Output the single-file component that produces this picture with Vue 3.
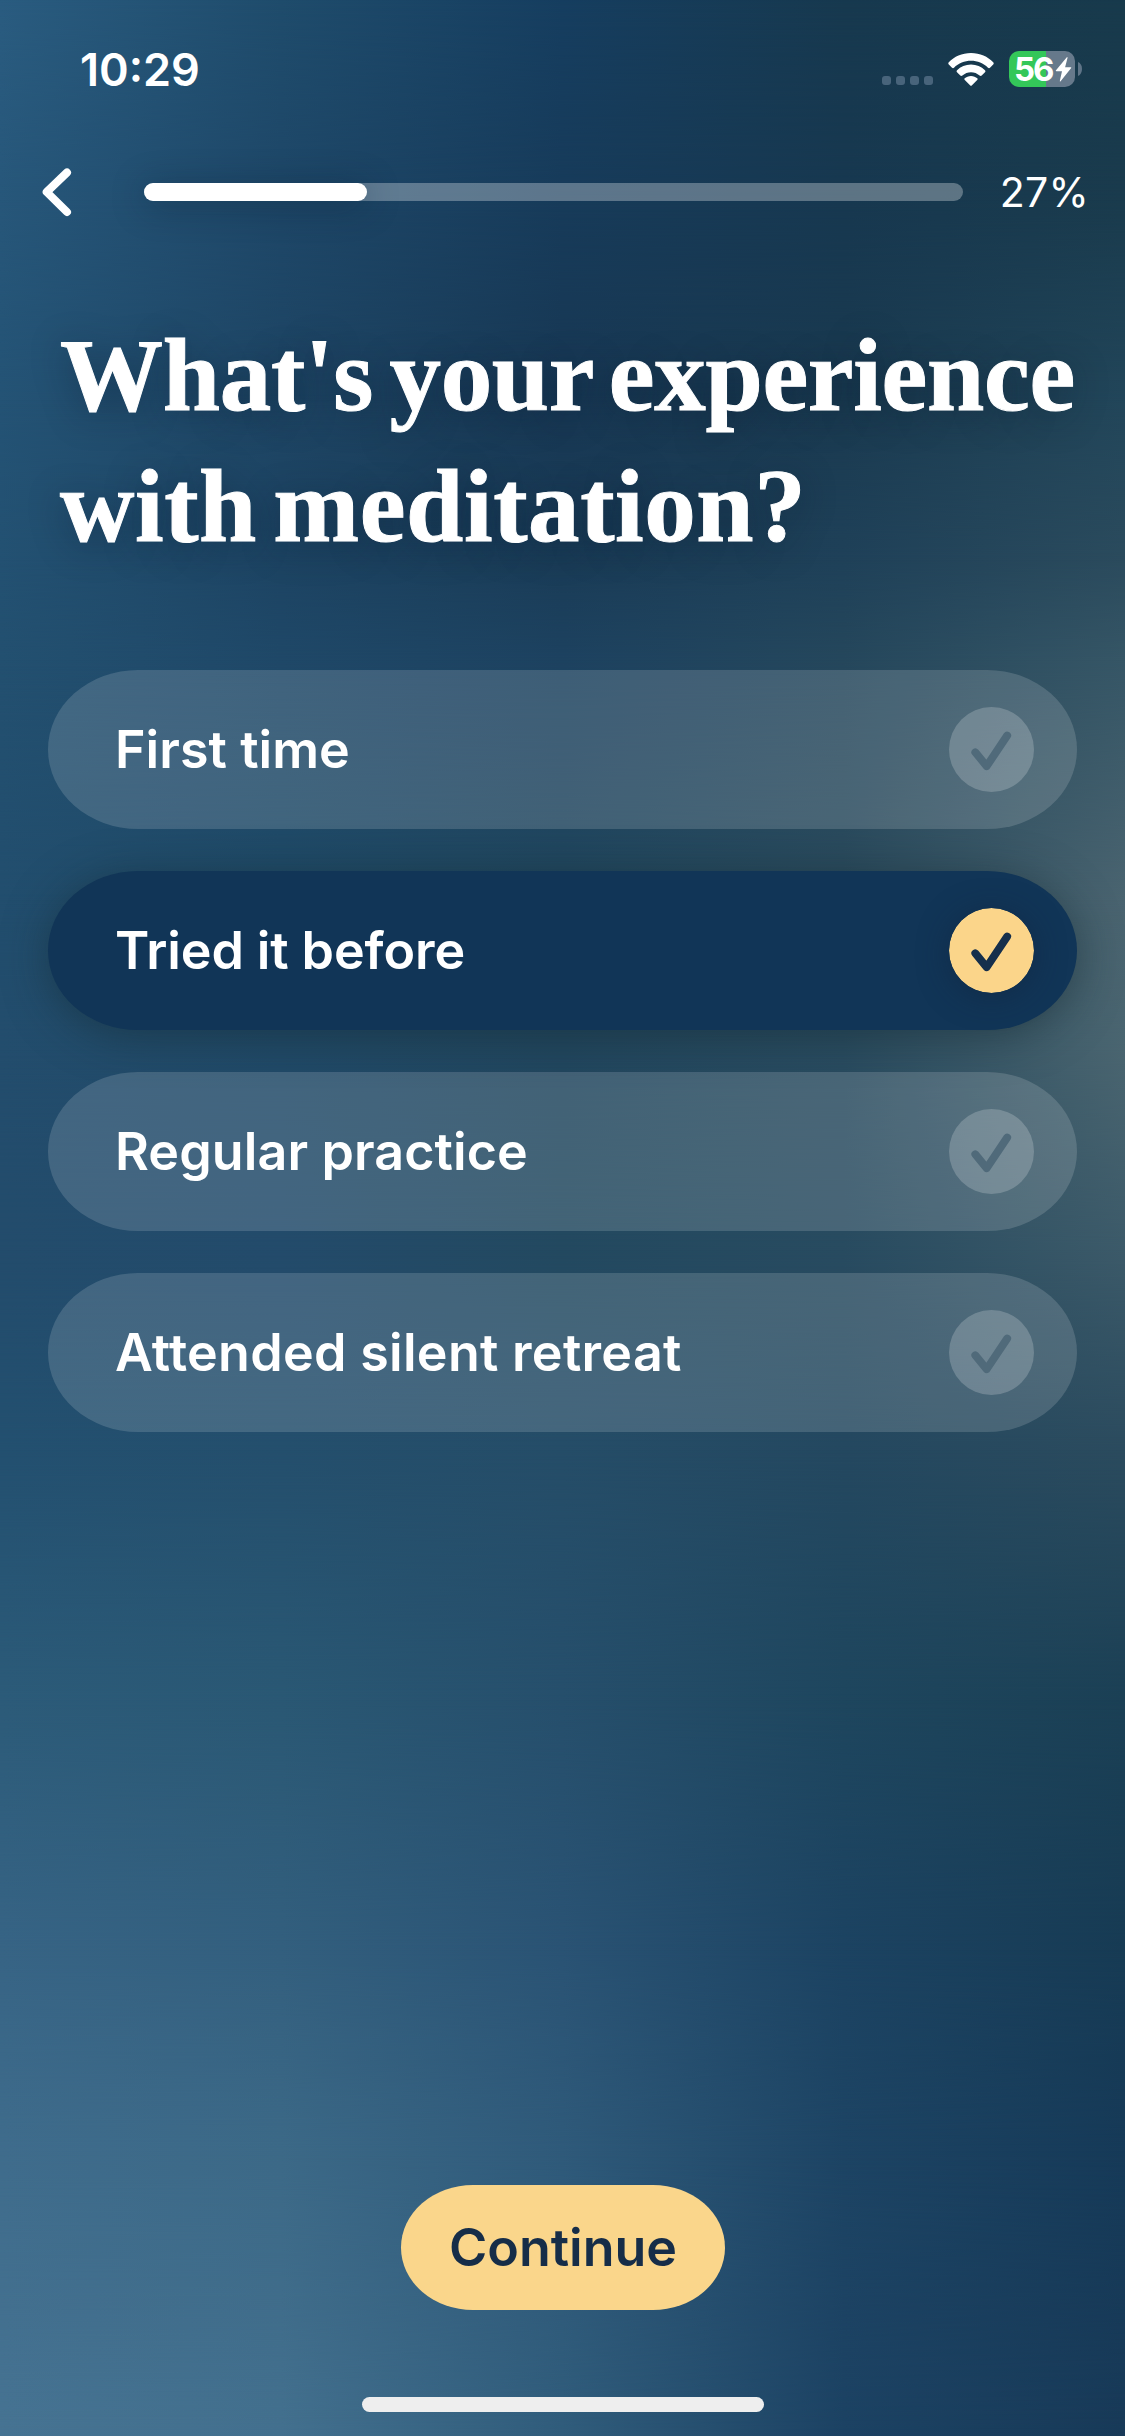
<script setup>
import { ref } from 'vue'

const progress = 27.2
const selected = ref(1)
const options = [
  { label: 'First time', spacing: 0.05 },
  { label: 'Tried it before', spacing: -0.1 },
  { label: 'Regular practice', spacing: 0.1 },
  { label: 'Attended silent retreat', spacing: 0.3 },
]

// Backdrop mesh: every row is a horizontal gradient that fades into the next one.
const mesh = [
  [0, '#2a5c80', '#1f4c6c', '#163e60', '#17394f', '#183a4c'],
  [200, '#27577a', '#1e4768', '#173b5a', '#173850', '#1a3b4d'],
  [400, '#245375', '#1e4564', '#183854', '#1a3a50', '#22465a'],
  [560, '#235172', '#1d4463', '#1a3c57', '#1f4159', '#2b4b5d'],
  [660, '#235070', '#1f4868', '#1d4260', '#25475c', '#365666'],
  [900, '#224e6e', '#204b68', '#22485f', '#2c4c5e', '#4a6470'],
  [1050, '#234d6d', '#214a68', '#22475f', '#2a4c60', '#4a6570'],
  [1250, '#234c6c', '#234b6b', '#234960', '#284b60', '#3c5a69'],
  [1450, '#235070', '#244f6d', '#254d68', '#244860', '#2b4b5e'],
  [1700, '#2c5b79', '#2a5874', '#264f6c', '#1e465e', '#1b4055'],
  [1950, '#376485', '#335f7e', '#2a5374', '#1c4362', '#173b54'],
  [2150, '#3f6c8c', '#3c6987', '#2f5a7a', '#1d4464', '#163a58'],
  [2436, '#467392', '#43708e', '#305c7b', '#1c4263', '#183a58'],
]
const layers = mesh.map(([y, ...stops], i) => {
  const top = i ? mesh[i - 1][0] : 0
  const fade = `linear-gradient(180deg, transparent 0, #000 ${y - top}px)`
  return {
    top: `${top}px`,
    backgroundImage: `linear-gradient(90deg, ${stops.join(', ')})`,
    maskImage: i ? fade : 'none',
  }
})
</script>

<template>
  <main class="screen">
    <div class="backdrop">
      <div v-for="(layer, i) in layers" :key="i" class="mesh-row" :style="layer"></div>
    </div>

    <header class="status">
      <span class="time">10:29</span>
      <div class="indicators">
        <div class="cell"><i v-for="n in 4" :key="n"></i></div>
        <svg class="wifi" width="46" height="33" viewBox="0 0 46 33" fill="#fff">
          <path d="M23 0C32 0 39.800 3.500 45.200 9.300Q46.200 10.400 45.200 11.400L42 14.700Q41 15.600 40 14.700C35.400 10.300 29.500 7.800 23 7.800S10.600 10.300 6 14.700Q5 15.600 4 14.700L.8 11.400Q-.2 10.400 .8 9.300C6.200 3.500 14 0 23 0Z" />
          <path d="M23 11.600C28.500 11.600 33.300 13.700 37 17.300Q38 18.300 37 19.300L33.700 22.500Q32.700 23.400 31.600 22.500C29.200 20.400 26.200 19.200 23 19.200S16.800 20.400 14.400 22.500Q13.300 23.400 12.300 22.500L9 19.300Q8 18.300 9 17.300C12.700 13.700 17.500 11.600 23 11.600Z" />
          <path d="M23 22.900C25.500 22.900 27.700 23.800 29.300 25.300Q30.100 26.100 29.200 27L24 32.200Q23 33.200 22 32.200L16.800 27Q15.900 26.100 16.700 25.300C18.300 23.800 20.500 22.900 23 22.900Z" />
        </svg>
        <div class="battery">
          <div class="battery-body">
            <span>56</span>
            <svg width="17" height="25" viewBox="0 0 17 25"><path d="M11.600.4 1 13.200Q.3 14.300 1.500 14.300H7L4.800 23.900Q4.700 25 5.600 24.200L16 11.300Q16.800 10.200 15.600 10.200H10.100L12.500 1Q12.600-.4 11.600.4Z" fill="#fff" /></svg>
          </div>
          <svg width="4" height="14" viewBox="0 0 4 14"><path d="M0 0Q4 1.800 4 7T0 14Z" fill="#5f7487" /></svg>
        </div>
      </div>
    </header>

    <nav class="nav">
      <svg class="back" width="32" height="52" viewBox="0 0 32 52" fill="none" stroke="#fff" stroke-width="8" stroke-linecap="round" stroke-linejoin="round"><path d="M27 6.500 6.700 26 27 46" /></svg>
      <div class="track"><div class="fill" :style="{ width: progress + '%' }"></div></div>
      <span class="percent">{{ Math.round(progress) }}%</span>
    </nav>

    <h1 class="title"><span class="l1">What's your experience</span><span class="l2">with meditation?</span></h1>

    <section class="options">
      <button
        v-for="(option, i) in options"
        :key="option.label"
        class="option"
        :class="{ active: i === selected }"
        @click="selected = i"
      >
        <span :style="{ letterSpacing: option.spacing + 'px' }">{{ option.label }}</span>
        <svg class="check" width="85" height="85" viewBox="0 0 85 85">
          <circle cx="42.500" cy="42.500" r="42.500" />
          <path d="M26.300 45.300 37.700 59.200 58.200 28.500" />
        </svg>
      </button>
    </section>

    <footer class="footer">
      <button class="continue">Continue</button>
      <div class="home"></div>
    </footer>
  </main>
</template>

<style>
body {
  margin: 0;
  background: #1d4464;
}
</style>

<style scoped>
.screen {
  position: relative;
  display: flex;
  flex-direction: column;
  width: 1125px;
  height: 2436px;
  overflow: hidden;
  color: #fff;
  font-family: Inter, 'Liberation Sans', sans-serif;
}
.backdrop {
  position: absolute;
  inset: 0;
  z-index: -1;
}
.mesh-row {
  position: absolute;
  left: 0;
  right: 0;
  bottom: 0;
}
.status {
  display: flex;
  align-items: center;
  justify-content: space-between;
  height: 138px;
  padding: 0 43px 0 80px;
  box-sizing: border-box;
}
.time {
  font-size: 45px;
  font-weight: 600;
}
.indicators {
  display: flex;
  align-items: center;
}
.cell {
  display: flex;
  gap: 5px;
  margin: 23px 15px 0 0;
}
.cell i {
  width: 9px;
  height: 9px;
  border-radius: 3px;
  background: #48647b;
}
.wifi {
  margin-right: 15px;
}
.battery {
  display: flex;
  align-items: center;
  gap: 3px;
}
.battery-body {
  display: flex;
  align-items: center;
  width: 66px;
  height: 36px;
  padding-left: 5px;
  box-sizing: border-box;
  border-radius: 10px;
  background: linear-gradient(90deg, #34c759 37px, #66798b 37px);
}
.battery-body span {
  width: 41px;
  font-size: 33px;
  line-height: 36px;
  font-weight: 700;
  letter-spacing: -2.2px;
}
.nav {
  display: flex;
  align-items: center;
  height: 108px;
  padding: 0 36px 0 40px;
}
.back {
  margin-right: 72px;
}
.track {
  width: 819px;
  height: 18px;
  border-radius: 9px;
  background: rgba(255, 255, 255, 0.3);
}
.fill {
  height: 18px;
  border-radius: 9px;
  background: #fff;
  box-shadow: 0 4px 34px rgba(10, 30, 50, 0.4);
}
.percent {
  margin-left: auto;
  font-size: 41px;
  letter-spacing: 0.3px;
}
.title {
  display: flex;
  flex-direction: column;
  height: 262px;
  margin: 64px 0 98px 60px;
  font-family: 'Liberation Serif', 'Times New Roman', serif;
  font-size: 103px;
  line-height: 131px;
  font-weight: 700;
  white-space: nowrap;
  -webkit-text-stroke: 1px #fff;
  text-shadow: 0 6px 36px rgba(10, 26, 44, 0.4);
}
.l1 {
  letter-spacing: -0.3px;
  word-spacing: -9px;
}
.l2 {
  letter-spacing: 0.6px;
  word-spacing: -10px;
}
.options {
  display: flex;
  flex-direction: column;
  gap: 42px;
  padding: 0 48px;
}
.option {
  display: flex;
  align-items: center;
  justify-content: space-between;
  height: 159px;
  padding: 0 43px 0 67px;
  border: 0;
  border-radius: 90px / 79.5px;
  background: rgba(255, 255, 255, 0.15);
  color: #fff;
  font: 600 52px/1 Inter, 'Liberation Sans', sans-serif;
}
.option.active {
  background: #113557;
  box-shadow: 0 6px 44px rgba(20, 40, 48, 0.5);
}
.check circle {
  fill: rgba(255, 255, 255, 0.2);
}
.check path {
  fill: none;
  stroke: #506a7a;
  stroke-width: 7.8;
  stroke-linecap: round;
  stroke-linejoin: round;
}
.active .check circle {
  fill: #fbd58a;
}
.active .check path {
  stroke: #152f4c;
}
.active .check {
  border-radius: 50%;
  box-shadow: 0 4px 30px rgba(18, 36, 60, 0.5);
}
.footer {
  display: flex;
  flex-direction: column;
  align-items: center;
  margin-top: auto;
  padding-bottom: 24px;
}
.continue {
  width: 324px;
  height: 125px;
  margin-bottom: 87px;
  padding: 0 0 0 1px;
  border: 0;
  border-radius: 72px / 62.5px;
  background: #fad68b;
  color: #162d48;
  font: 600 52px/1 Inter, 'Liberation Sans', sans-serif;
}
.home {
  width: 402px;
  height: 15px;
  border-radius: 8px;
  background: #eee;
}
</style>
